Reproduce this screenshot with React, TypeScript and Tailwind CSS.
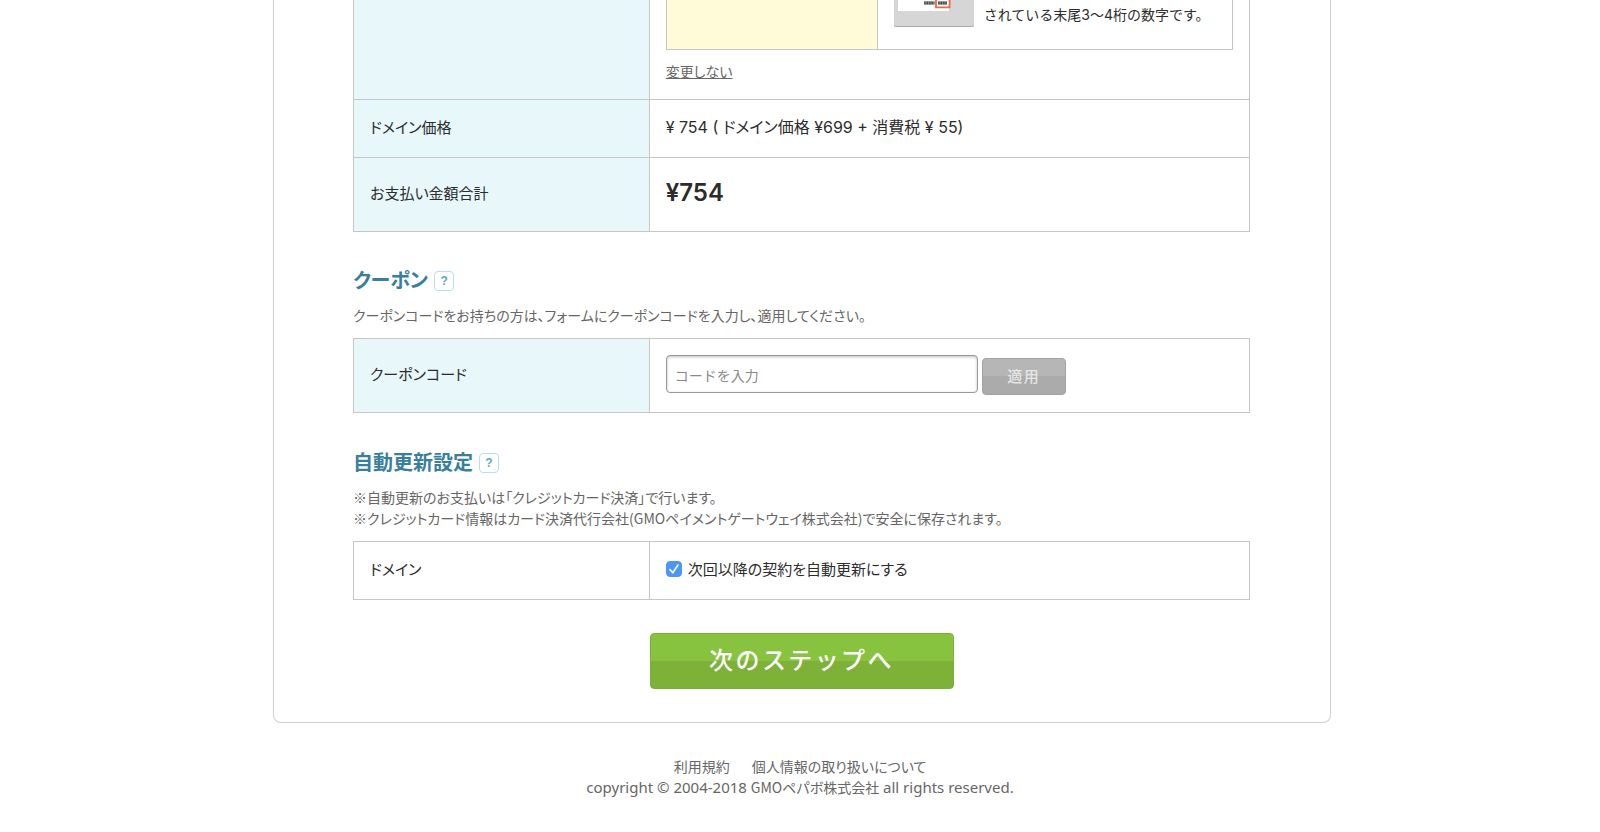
import { useState } from "react";
import type { ReactNode } from "react";

const cell = "border border-[#c6c6c6] px-4 pb-0.5 text-left font-normal align-middle";
const head = `${cell} w-[33%] bg-[#e7f7fa]`;

function HelpButton({ label }: { label: string }) {
  return (
    <button
      type="button"
      aria-label={label}
      className="mt-0.5 flex size-5 items-center justify-center rounded border border-[#b9e0ea] bg-white font-['Liberation_Sans',sans-serif] text-xs font-bold text-[#5aa9c4]"
    >
      ?
    </button>
  );
}

function SectionTitle({ children, help }: { children: ReactNode; help: string }) {
  return (
    <div className="flex items-center gap-1.5">
      <h2 className="text-xl leading-8 font-bold text-[#387f9d]">{children}</h2>
      <HelpButton label={help} />
    </div>
  );
}

function CardBack() {
  return (
    <svg width="80" height="27" viewBox="0 0 80 27" className="shrink-0" role="img" aria-label="カード裏面">
      <path d="M0 0h80v25a2 2 0 0 1-2 2H2a2 2 0 0 1-2-2z" fill="#d6d6d6" />
      <path d="M0 24v1a2 2 0 0 0 2 2h76a2 2 0 0 0 2-2v-1a2 2 0 0 1-2 2H2a2 2 0 0 1-2-2z" fill="#a9a9a9" />
      <rect x="4" width="51" height="11" fill="#fff" />
      <path d="M30 3h10.5M44 3h9" stroke="#8a8a8a" strokeWidth="3.4" />
      <path d="M30.4 3h10M44.4 3h8.4" stroke="#444" strokeWidth="2.4" strokeDasharray="1.2 1.2" />
      <path d="M42 0v7.3h13.6V0" fill="none" stroke="#ee6a45" strokeWidth="1.8" />
    </svg>
  );
}

export default function App() {
  const [code, setCode] = useState("");
  const [autoRenew, setAutoRenew] = useState(true);

  return (
    <div className="min-h-screen bg-white font-['Noto_Sans_CJK_JP',sans-serif] text-[15px] text-[#2c2c2c] [font-feature-settings:'palt']">
      <main className="pl-1">
        <div className="mx-auto max-w-[1058px] rounded-b-lg border border-t-0 border-[#cfcfcf] pr-20 pb-[33px] pl-[79px]">
          <table className="w-full table-fixed border-collapse">
            <tbody>
              <tr>
                <th scope="row" className={`${head} border-t-0`}></th>
                <td className="border border-t-0 border-[#c6c6c6] px-4 pb-4 align-middle">
                  <div className="flex h-[50px] border border-t-0 border-[#c6c6c6]">
                    <div className="w-[211px] shrink-0 border-r border-[#c6c6c6] bg-[#fffbd8]"></div>
                    <div className="flex items-end gap-2.5 px-4 pb-[22px]">
                      <CardBack />
                      <p className="pb-0.5 font-[Inter,'Noto_Sans_CJK_JP',sans-serif] text-sm leading-[21px] [font-feature-settings:normal]">
                        されている末尾3〜4桁の数字です。
                      </p>
                    </div>
                  </div>
                  <a href="#keep" className="mt-[11px] inline-block text-sm leading-[21px] text-[#666] underline">
                    変更しない
                  </a>
                </td>
              </tr>
              <tr className="h-[58px]">
                <th scope="row" className={head}>ドメイン価格</th>
                <td className={`${cell} font-[Inter,'Noto_Sans_CJK_JP',sans-serif] text-base`}>
                  ¥ 754 ( ドメイン価格 ¥699 + 消費税 ¥ 55)
                </td>
              </tr>
              <tr className="h-[74px]">
                <th scope="row" className={head}>お支払い金額合計</th>
                <td className={cell}>
                  <strong className="font-[Inter,sans-serif] text-2xl font-semibold">¥754</strong>
                </td>
              </tr>
            </tbody>
          </table>

          <section className="mt-8">
            <SectionTitle help="クーポンについて">クーポン</SectionTitle>
            <p className="mt-[9px] text-sm leading-[21px] text-[#666]">
              クーポンコードをお持ちの方は、フォームにクーポンコードを入力し、適用してください。
            </p>
            <table className="mt-3 w-full table-fixed border-collapse">
              <tbody>
                <tr className="h-[74px]">
                  <th scope="row" className={head}>
                    <label htmlFor="coupon">クーポンコード</label>
                  </th>
                  <td className={cell}>
                    <div className="flex items-center gap-1 [font-feature-settings:normal]">
                      <input
                        id="coupon"
                        type="text"
                        value={code}
                        onChange={(e) => setCode(e.target.value)}
                        placeholder="コードを入力"
                        className="h-[38px] w-[312px] rounded border border-[#999] px-2 pt-0.5 text-sm shadow-[inset_0_1px_3px_rgba(0,0,0,0.25)] [font-feature-settings:normal] placeholder:text-[#8a8a8a]"
                      />
                      <button
                        type="button"
                        className="mt-1 h-[37px] w-[84px] rounded border border-[#a3a3a3] bg-linear-to-b from-[#b6b6b6] from-50% to-[#ababab] to-50% text-[15px] font-medium tracking-widest text-[#e6e6e6]"
                      >
                        適用
                      </button>
                    </div>
                  </td>
                </tr>
              </tbody>
            </table>
          </section>

          <section className="mt-[33px]">
            <SectionTitle help="自動更新設定について">自動更新設定</SectionTitle>
            <p className="mt-[9px] text-sm leading-[21px] text-[#666]">
              ※自動更新のお支払いは「クレジットカード決済」で行います。
              <br />
              ※クレジットカード情報はカード決済代行会社(GMOペイメントゲートウェイ株式会社)で安全に保存されます。
            </p>
            <table className="mt-3 w-full table-fixed border-collapse">
              <tbody>
                <tr className="h-[58px]">
                  <th scope="row" className={`${cell} w-[33%]`}>ドメイン</th>
                  <td className={cell}>
                    <label className="flex items-center gap-1.5">
                      <input
                        type="checkbox"
                        checked={autoRenew}
                        onChange={(e) => setAutoRenew(e.target.checked)}
                        className="peer sr-only"
                      />
                      <span className="flex size-4 items-center justify-center rounded-sm border border-[#4a97f7] bg-white text-white peer-checked:bg-[#4a97f7]">
                        <svg width="12" height="12" viewBox="0 0 12 12" fill="none" stroke="currentColor" strokeWidth="1.6">
                          <path d="M2 6.6 4.8 9.8 10 2" strokeLinecap="round" strokeLinejoin="round" />
                        </svg>
                      </span>
                      次回以降の契約を自動更新にする
                    </label>
                  </td>
                </tr>
              </tbody>
            </table>
          </section>

          <div className="mt-[33px] flex justify-center">
            <button
              type="submit"
              className="h-14 w-[304px] rounded border border-[#79b136] bg-linear-to-b from-[#87c33f] from-50% to-[#7db138] to-50% pb-1 text-2xl font-medium tracking-widest text-white [font-feature-settings:normal]"
            >
              次のステップへ
            </button>
          </div>
        </div>
      </main>

      <footer className="pt-[33px] pb-8 text-center text-sm leading-[21px] text-[#666]">
        <nav className="flex justify-center gap-[22px]">
          <a href="#terms">利用規約</a>
          <a href="#privacy">個人情報の取り扱いについて</a>
        </nav>
        <p>
          <span className="font-['Noto_Sans',sans-serif] text-[15px]">copyright © 2004-2018 </span>
          GMOペパボ株式会社
          <span className="font-['Noto_Sans',sans-serif] text-[15px]"> all rights reserved.</span>
        </p>
      </footer>
    </div>
  );
}
